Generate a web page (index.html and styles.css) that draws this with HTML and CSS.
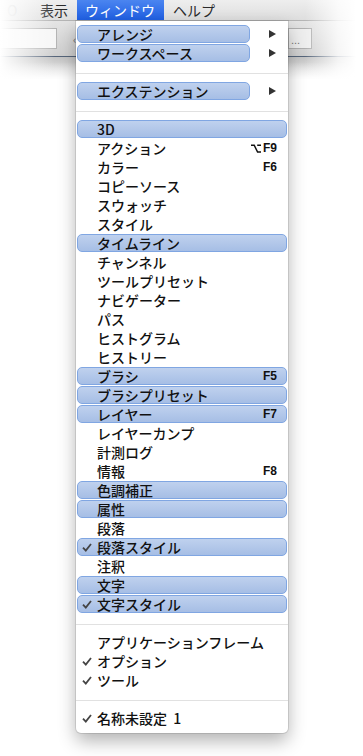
FILE: index.html
```html
<!DOCTYPE html>
<html lang="ja">
<head>
    <meta charset="UTF-8">
    <meta name="viewport" content="width=device-width, initial-scale=1.0">
    <title>ウィンドウ メニュー</title>
    <link rel="stylesheet" href="styles.css">
</head>
<body>
    <div class="screen">
        <!-- 背景のアプリ画面 -->
        <div class="backdrop">
            <div class="menubar">
                <span class="mb-item faint">O</span>
                <span class="mb-item">表示</span>
                <span class="mb-item active">ウィンドウ</span>
                <span class="mb-item">ヘルプ</span>
            </div>
            <div class="toolbar">
                <div class="field"></div>
                <span class="tick">‹</span>
                <div class="browse">...</div>
            </div>
            <div class="subbar"></div>
        </div>

        <!-- ウィンドウ メニュー -->
        <div class="menu">
            <div class="subrow">
                <div class="item on"><span class="mark"></span><span class="label">アレンジ</span></div>
                <span class="arrow"></span>
            </div>
            <div class="subrow">
                <div class="item on"><span class="mark"></span><span class="label">ワークスペース</span></div>
                <span class="arrow"></span>
            </div>
            <div class="sep"></div>
            <div class="subrow">
                <div class="item on"><span class="mark"></span><span class="label">エクステンション</span></div>
                <span class="arrow"></span>
            </div>
            <div class="sep"></div>

            <div class="item on"><span class="mark"></span><span class="label">3D</span></div>
            <div class="item"><span class="mark"></span><span class="label">アクション</span>
                <span class="key"><svg class="opt" width="10" height="9" viewBox="0 0 10 9"><path d="M0 1.2H3.2L6.6 8H10M6.2 1.2H10" fill="none" stroke="#111" stroke-width="1.5"/></svg>F9</span></div>
            <div class="item"><span class="mark"></span><span class="label">カラー</span><span class="key">F6</span></div>
            <div class="item"><span class="mark"></span><span class="label">コピーソース</span></div>
            <div class="item"><span class="mark"></span><span class="label">スウォッチ</span></div>
            <div class="item"><span class="mark"></span><span class="label">スタイル</span></div>
            <div class="item on"><span class="mark"></span><span class="label">タイムライン</span></div>
            <div class="item"><span class="mark"></span><span class="label">チャンネル</span></div>
            <div class="item"><span class="mark"></span><span class="label">ツールプリセット</span></div>
            <div class="item"><span class="mark"></span><span class="label">ナビゲーター</span></div>
            <div class="item"><span class="mark"></span><span class="label">パス</span></div>
            <div class="item"><span class="mark"></span><span class="label">ヒストグラム</span></div>
            <div class="item"><span class="mark"></span><span class="label">ヒストリー</span></div>
            <div class="item on"><span class="mark"></span><span class="label">ブラシ</span><span class="key">F5</span></div>
            <div class="item on"><span class="mark"></span><span class="label">ブラシプリセット</span></div>
            <div class="item on"><span class="mark"></span><span class="label">レイヤー</span><span class="key">F7</span></div>
            <div class="item"><span class="mark"></span><span class="label">レイヤーカンプ</span></div>
            <div class="item"><span class="mark"></span><span class="label">計測ログ</span></div>
            <div class="item"><span class="mark"></span><span class="label">情報</span><span class="key">F8</span></div>
            <div class="item on"><span class="mark"></span><span class="label">色調補正</span></div>
            <div class="item on"><span class="mark"></span><span class="label">属性</span></div>
            <div class="item"><span class="mark"></span><span class="label">段落</span></div>
            <div class="item on"><span class="mark"><svg width="10" height="9" viewBox="0 0 10 9"><path d="M1 4.6L3.8 7.6L9 1" fill="none" stroke="#444" stroke-width="1.8"/></svg></span><span class="label">段落スタイル</span></div>
            <div class="item"><span class="mark"></span><span class="label">注釈</span></div>
            <div class="item on"><span class="mark"></span><span class="label">文字</span></div>
            <div class="item on"><span class="mark"><svg width="10" height="9" viewBox="0 0 10 9"><path d="M1 4.6L3.8 7.6L9 1" fill="none" stroke="#444" stroke-width="1.8"/></svg></span><span class="label">文字スタイル</span></div>
            <div class="sep"></div>

            <div class="item"><span class="mark"></span><span class="label">アプリケーションフレーム</span></div>
            <div class="item"><span class="mark"><svg width="10" height="9" viewBox="0 0 10 9"><path d="M1 4.6L3.8 7.6L9 1" fill="none" stroke="#444" stroke-width="1.8"/></svg></span><span class="label">オプション</span></div>
            <div class="item"><span class="mark"><svg width="10" height="9" viewBox="0 0 10 9"><path d="M1 4.6L3.8 7.6L9 1" fill="none" stroke="#444" stroke-width="1.8"/></svg></span><span class="label">ツール</span></div>
            <div class="sep"></div>

            <div class="item"><span class="mark"><svg width="10" height="9" viewBox="0 0 10 9"><path d="M1 4.6L3.8 7.6L9 1" fill="none" stroke="#444" stroke-width="1.8"/></svg></span><span class="label">名称未設定&nbsp; 1</span></div>
        </div>
    </div>
</body>
</html>
```

FILE: styles.css
```css
html, body {
    margin: 0;
    padding: 0;
    background: #fff;
}
.screen {
    position: relative;
    width: 363px;
    height: 756px;
    overflow: hidden;
    background: #fff;
    font-family: "Noto Sans CJK JP", "Noto Sans", sans-serif;
    color: #111;
}

/* 背景 */
.backdrop {
    position: relative;
}
.backdrop::after {
    content: "";
    position: absolute;
    left: 0;
    top: 0;
    right: 0;
    bottom: 0;
    background:
        linear-gradient(to right, #fff 0px, rgba(255,255,255,0.8) 10px, rgba(255,255,255,0) 55px, rgba(255,255,255,0) 305px, rgba(255,255,255,0.8) 338px, #fff 356px),
        linear-gradient(to bottom, rgba(255,255,255,0) 62px, rgba(255,255,255,0.6) 74px, #fff 80px);
    pointer-events: none;
}
.menubar {
    display: flex;
    height: 20px;
    background: linear-gradient(#eeeeee, #dedede);
    border-bottom: 1px solid #b5b5b5;
    font-size: 14px;
    line-height: 20px;
    color: #2a2a2a;
}
.mb-item {
    padding: 0 9px;
}
.mb-item.faint {
    width: 13px;
    padding: 0 0 0 7px;
    margin-right: 11px;
    color: #ccc;
}
.mb-item.active {
    position: relative;
    z-index: 2;
    padding: 0 9px 0 8px;
    background: linear-gradient(#4b85f0, #1f5fe3);
    color: #fff;
}
.toolbar {
    display: flex;
    align-items: center;
    height: 35px;
    background: linear-gradient(#e4e4e4, #cfcfcf);
    border-bottom: 1px solid #56657a;
}
.field {
    width: 56px;
    height: 19px;
    background: #f6f6f6;
    border: 1px solid #b4b4b4;
    border-left: none;
}
.tick {
    margin-left: 16px;
    font-size: 11px;
    color: #666;
}
.browse {
    width: 22px;
    height: 19px;
    margin-left: auto;
    margin-right: 51px;
    background: #eee;
    border: 1px solid #b0b0b0;
    font-family: "Liberation Sans", sans-serif;
    font-size: 11px;
    line-height: 22px;
    color: #777;
    text-indent: 2px;
}
.subbar {
    height: 22px;
    background: linear-gradient(#c4c4c4, #efefef);
}

/* メニュー */
.menu {
    position: absolute;
    z-index: 3;
    left: 76px;
    top: 21px;
    width: 212px;
    height: 712px;
    box-sizing: border-box;
    padding-top: 4px;
    display: flex;
    flex-direction: column;
    background: #fff;
    border-radius: 0 0 5px 5px;
    box-shadow: 0 0 0 1px rgba(0,0,0,0.10), 0 8px 18px rgba(0,0,0,0.30);
}
.item {
    display: flex;
    align-items: center;
    box-sizing: border-box;
    height: 18px;
    margin: 0 1px 1px;
    padding: 0 9px 0 4px;
    border: 1px solid transparent;
    border-radius: 5px;
    font-size: 14px;
    font-weight: 500;
    line-height: 16px;
}
.item.on {
    background: linear-gradient(#bfd1ee, #a6bee5);
    border-color: #80a6e2;
}
.mark {
    display: flex;
    align-items: center;
    width: 15px;
    height: 16px;
    flex-shrink: 0;
}
.label {
    flex-grow: 1;
    white-space: nowrap;
}
.key {
    display: flex;
    align-items: center;
    gap: 2px;
    font-family: "Liberation Sans", sans-serif;
    font-weight: bold;
    font-size: 12px;
}
.subrow {
    display: flex;
    align-items: center;
}
.subrow .item {
    width: 173px;
}
.arrow {
    margin-left: auto;
    margin-right: 12px;
    margin-bottom: 1px;
    width: 0;
    height: 0;
    border-left: 7px solid #333;
    border-top: 4.5px solid transparent;
    border-bottom: 4.5px solid transparent;
}
.sep {
    height: 1px;
    margin: 10px 0 8px;
    background: #e1e1e1;
    flex-shrink: 0;
}
```
